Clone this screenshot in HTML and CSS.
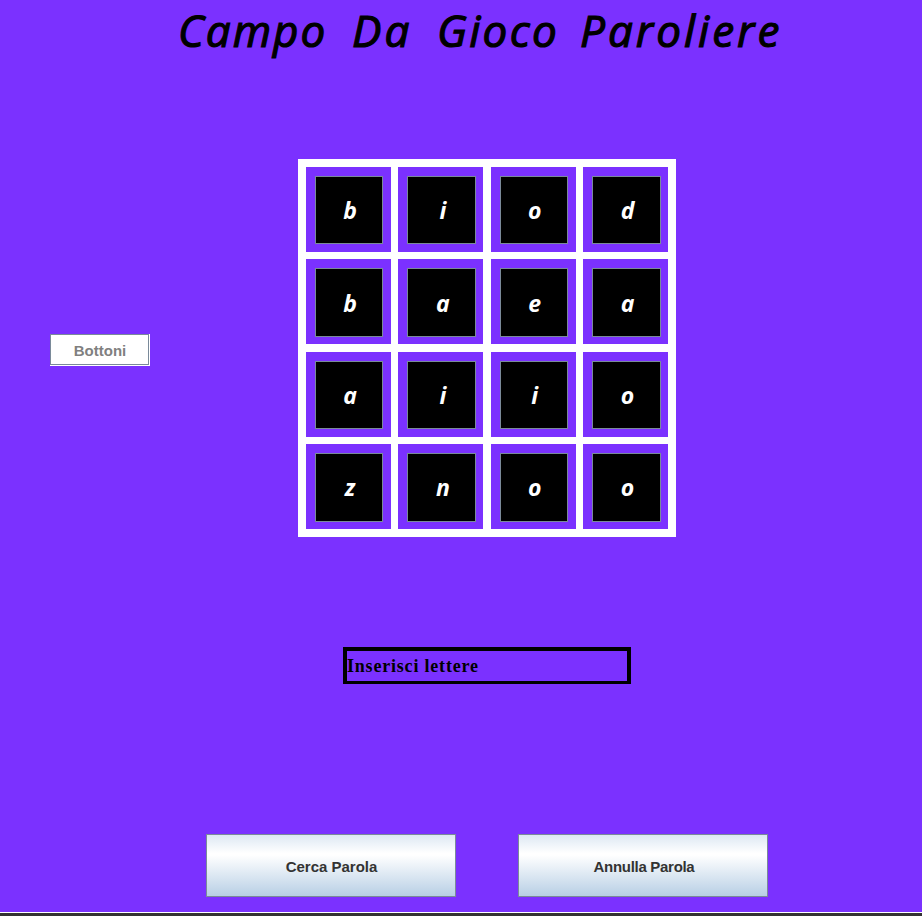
FILE: index.html
```html
<!DOCTYPE html>
<html lang="it">
<head>
<meta charset="utf-8">
<title>Campo Da Gioco Paroliere</title>
<link rel="stylesheet" href="styles.css">
</head>
<body>
<main class="window">
  <h1 class="title"><span class="campo">Campo</span> <span class="da">Da</span> <span class="gioco">Gioco</span> <span class="paroliere">Paroliere</span></h1>
  <section class="middle">
    <button class="mode" disabled>Bottoni</button>
    <div class="board">
      <div class="cell"><button class="tile">b</button></div>
      <div class="cell"><button class="tile">i</button></div>
      <div class="cell"><button class="tile">o</button></div>
      <div class="cell"><button class="tile">d</button></div>
      <div class="cell"><button class="tile">b</button></div>
      <div class="cell"><button class="tile">a</button></div>
      <div class="cell"><button class="tile">e</button></div>
      <div class="cell"><button class="tile">a</button></div>
      <div class="cell"><button class="tile">a</button></div>
      <div class="cell"><button class="tile">i</button></div>
      <div class="cell"><button class="tile">i</button></div>
      <div class="cell"><button class="tile">o</button></div>
      <div class="cell"><button class="tile">z</button></div>
      <div class="cell"><button class="tile">n</button></div>
      <div class="cell"><button class="tile">o</button></div>
      <div class="cell"><button class="tile">o</button></div>
    </div>
  </section>
  <div class="field"><span>Inserisci lettere</span></div>
  <div class="actions">
    <button class="action">Cerca Parola</button>
    <button class="action cancel">Annulla Parola</button>
  </div>
  <footer class="edge"></footer>
</main>
</body>
</html>
```
FILE: styles.css
```css
* { box-sizing: border-box; }

body {
  margin: 0;
  background: #7b31ff;
}

button {
  margin: 0;
  padding: 0;
  border: 1px solid #7a8a99;
  border-radius: 0;
}

.window {
  display: flex;
  flex-direction: column;
  height: 916px;
}

.title {
  display: flex;
  height: 159px;
  margin: 0;
  padding: 0 0 0 178px;
  font: italic 500 44px/60px "Open Sans", sans-serif;
  color: #000;
  -webkit-text-stroke: 1.2px #000;
  white-space: nowrap;
}

.campo { width: 174px; letter-spacing: 2px; }
.da { width: 85px; letter-spacing: 3px; }
.gioco { width: 143px; letter-spacing: 2.3px; }
.paroliere { letter-spacing: 3px; }

.middle {
  display: flex;
  align-items: flex-start;
  padding-left: 50px;
}

.mode {
  width: 99px;
  height: 31px;
  margin: 175px 149px 0 0;
  padding: 1px 0 0 1px;
  background: #fff;
  box-shadow: 1px 0 0 #fff, 0 1px 0 #fff, 1px 1px 0 #fff;
  color: #808080;
  font: bold 15px/29px "Liberation Sans", sans-serif;
}

.board {
  display: grid;
  grid-template-columns: repeat(4, 85px);
  grid-template-rows: repeat(4, 85px);
  gap: 7.333px;
  width: 378px;
  height: 378px;
  padding: 8px;
  background: #fff;
}

.cell {
  display: grid;
  padding: 9px 8px 8px 9px;
  background: #7b31ff;
}

.cell:nth-child(even) { padding-right: 7px; }
.cell:nth-child(n+5):nth-child(-n+8),
.cell:nth-child(n+13) { padding-bottom: 7px; }

.tile {
  padding-left: 2px;
  background: #000;
  color: #fff;
  font: italic 700 23px/66px "Open Sans", sans-serif;
}

.field {
  width: 288px;
  height: 37px;
  margin: 110px 0 0 343px;
  border: 4px solid #000;
  border-bottom-width: 3px;
  color: #000;
  font: bold 18px/31px "Liberation Serif", serif;
  letter-spacing: 0.8px;
}

.actions {
  display: flex;
  gap: 62px;
  margin: 150px 0 0 206px;
}

.action {
  width: 250px;
  height: 63px;
  padding: 1px 0 0 1px;
  background: linear-gradient(#dde8f3 0%, #fff 30%, #fff 33%, #b8cfe5 100%);
  color: #333;
  font: bold 15px/61px "Liberation Sans", sans-serif;
}

.cancel {
  padding-left: 2px;
  letter-spacing: -0.3px;
}

.edge {
  height: 4px;
  margin-top: auto;
  border-top: 1px solid #fff;
  background: #333;
}
```
